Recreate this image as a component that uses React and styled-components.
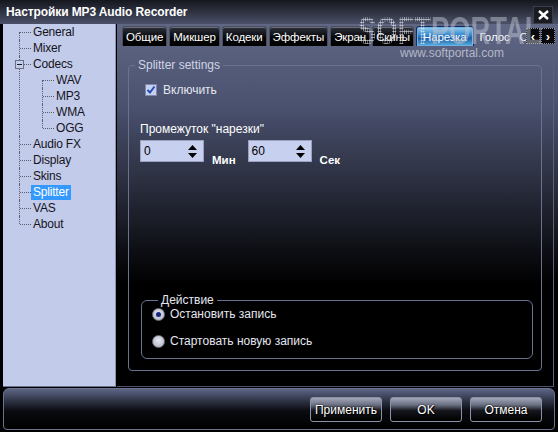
import React from "react";
import styled, { createGlobalStyle, css } from "styled-components";

const Global = createGlobalStyle`
  html, body { margin: 0; padding: 0; background: #000; }
  body { font-family: "Liberation Sans", Arial, sans-serif; font-size: 11px; }
  * { box-sizing: border-box; }
`;

const Window = styled.div`
  position: relative;
  width: 558px;
  height: 432px;
  background: #000;
  display: flex;
  flex-direction: column;
  overflow: hidden;
`;

const TitleBar = styled.div`
  height: 24px;
  flex: none;
  display: flex;
  align-items: center;
  justify-content: space-between;
  padding: 0 6px 0 6px;
  background: linear-gradient(#15171e 0%, #2c303e 45%, #4a5068 100%);
`;

const Title = styled.div`
  color: #fff;
  font-weight: bold;
  font-size: 12px;
  letter-spacing: -0.1px;
`;

const CloseBtn = styled.div`
  width: 20px;
  height: 18px;
  margin-top: 6px;
  margin-right: -1px;
  background: #1a1c22;
  border: 1px solid #3a3e4a;
  display: flex;
  align-items: center;
  justify-content: center;
`;

const Main = styled.div`
  flex: none;
  height: 363px;
  display: flex;
  padding-left: 3px;
`;

const Tree = styled.div`
  width: 113px;
  flex: none;
  background: #c3cbea;
  border-right: 1px solid #8a92b0;
  border-bottom: 1px solid #6a7290;
  padding-left: 16px;
`;

const TreeList = styled.ul`
  list-style: none;
  margin: 0;
  padding: 0;
  ${(p) =>
    p.$nested &&
    css`
      padding-left: 23px;
    `}
`;

const TreeItem = styled.li`
  position: relative;
  &::before {
    content: "";
    position: absolute;
    left: 0;
    top: 0;
    height: 100%;
    border-left: 1px dotted #5a5f70;
  }
  &:first-child::before {
    top: 8px;
    height: calc(100% - 8px);
  }
  &:last-child::before {
    height: 8px;
  }
`;

const Row = styled.div`
  position: relative;
  height: 16px;
  display: flex;
  align-items: center;
  padding-left: 12px;
  &::after {
    content: "";
    position: absolute;
    left: 1px;
    top: 8px;
    width: 11px;
    border-top: 1px dotted #5a5f70;
  }
`;

const Label = styled.span`
  color: #14141c;
  font-size: 12px;
  line-height: 15px;
  padding: 0 2px;
  letter-spacing: -0.2px;
  ${(p) =>
    p.$selected &&
    css`
      background: #3399ff;
      color: #fff;
    `}
`;

const Toggle = styled.span`
  position: absolute;
  left: -4px;
  top: 4px;
  width: 9px;
  height: 9px;
  background: #c3cbea;
  border: 1px solid #6c7080;
  z-index: 1;
  &::after {
    content: "";
    position: absolute;
    left: 1px;
    top: 3px;
    width: 5px;
    border-top: 1px solid #1a1a24;
  }
`;

const Right = styled.div`
  flex: 1;
  display: flex;
  flex-direction: column;
  margin-left: 1px;
  background: linear-gradient(#5f6785 0px, #4b5270 80px, #2a2e3e 160px, #0c0d12 230px, #000 260px);
`;

const TabsRow = styled.div`
  height: 22px;
  flex: none;
  display: flex;
  align-items: flex-end;
  padding-left: 5px;
  gap: 2px;
  position: relative;
`;

const Tab = styled.div`
  height: 20px;
  padding: 0 3px;
  display: flex;
  align-items: center;
  color: #fff;
  font-size: 11.5px;
  letter-spacing: -0.1px;
  border: 1px solid #4a4e5c;
  border-bottom: none;
  border-radius: 3px 3px 0 0;
  background: linear-gradient(#2e313c, #050507 60%, #000);
  box-shadow: inset 0 1px 0 #6a6e7c;
  ${(p) =>
    p.$active &&
    css`
      background: linear-gradient(#9bd0f0 0%, #3a8cd0 40%, #1c5fa8 60%, #5ab2e0 100%);
      border-color: #1a2a50;
      box-shadow: inset 0 0 0 1px #6ab0e8;
      padding: 0 6px;
    `}
  ${(p) =>
    p.$plain &&
    css`
      background: transparent;
      border-color: transparent;
      box-shadow: none;
    `}
`;

const Scroller = styled.div`
  position: absolute;
  right: 3px;
  top: 4px;
  display: flex;
  gap: 1px;
`;

const ScrollBtn = styled.div`
  width: 14px;
  height: 16px;
  background: #0a0a0e;
  border: 1px dotted #8a8e9a;
  color: #fff;
  font-size: 13px;
  font-weight: bold;
  display: flex;
  align-items: center;
  justify-content: center;
`;

const Page = styled.div`
  flex: 1;
  display: flex;
  padding: 13px 11px 15px 11px;
  border-right: 1px solid #5a6278;
  border-bottom: 1px solid #4a5068;
  margin-right: 4px;
`;

const Group = styled.fieldset`
  flex: 1;
  margin: 0;
  padding: 0;
  border: 1px solid #6a7290;
  border-radius: 4px;
  display: flex;
  flex-direction: column;
  min-width: 0;
  ${(p) =>
    p.$inner &&
    css`
      flex: none;
      height: 65px;
      margin: auto 8px 11px 12px;
      border-radius: 6px;
      padding: 1px 0 0 10px;
      gap: 13px;
    `}
`;

const Legend = styled.legend`
  padding: 0 3px;
  margin-left: 6px;
  font-size: 12px;
  color: ${(p) => p.$color || "#d0d4e4"};
  line-height: 12px;
`;

const CheckRow = styled.label`
  display: flex;
  align-items: center;
  gap: 6px;
  margin: 12px 0 0 16px;
  color: #e4e6f0;
  font-size: 12px;
`;

const CheckBox = styled.span`
  width: 12px;
  height: 12px;
  background: #c8d0f0;
  border: 1px solid #8088a8;
  display: flex;
  align-items: center;
  justify-content: center;
`;

const FieldTitle = styled.div`
  margin: 25px 0 0 11px;
  color: #fff;
  font-size: 12px;
`;

const SpinRow = styled.div`
  display: flex;
  align-items: flex-end;
  margin: 4px 0 0 11px;
`;

const Spin = styled.div`
  width: 64px;
  height: 22px;
  background: #c8d0f0;
  border: 1px solid #9aa2c0;
  display: flex;
  align-items: center;
  justify-content: space-between;
  padding: 0 6px 0 3px;
  color: #000;
  font-size: 12px;
`;

const Arrows = styled.div`
  display: flex;
  flex-direction: column;
  gap: 3px;
`;

const Unit = styled.span`
  color: #fff;
  font-size: 11.5px;
  margin: 0 ${(p) => p.$mr || 0}px -4px 8px;
  font-weight: bold;
`;

const RadioRow = styled.div`
  display: flex;
  align-items: center;
  gap: 5px;
  color: #e4e6f0;
  font-size: 12px;
`;

const Radio = styled.span`
  width: 13px;
  height: 13px;
  border-radius: 50%;
  background: radial-gradient(circle at 50% 40%, #e8eaf2, #a8acbc);
  border: 1px solid #70747f;
  display: flex;
  align-items: center;
  justify-content: center;
  ${(p) =>
    p.$on &&
    css`
      &::after {
        content: "";
        width: 5px;
        height: 5px;
        border-radius: 50%;
        background: #14247a;
      }
    `}
`;

const BottomBar = styled.div`
  flex: 1;
  margin: 1px 3px 2px 3px;
  border: 1px solid #6a7290;
  border-radius: 6px 6px 4px 4px;
  background: linear-gradient(#5d6584 0%, #3a4055 22%, #0a0b10 55%, #000 100%);
  display: flex;
  justify-content: flex-end;
  align-items: flex-start;
  gap: 8px;
  padding: 8px 12px 0 0;
`;

const Button = styled.button`
  width: 72px;
  height: 25px;
  border: 1px solid #8a92aa;
  border-radius: 3px;
  background: linear-gradient(#a2a8b8 0%, #6a7082 30%, #15161c 55%, #000 100%);
  color: #fff;
  font-family: "Liberation Sans", Arial, sans-serif;
  font-size: 12px;
  text-shadow: 0 0 2px #000, 1px 1px 1px #000;
  padding: 0;
`;

const Watermark = styled.div`
  position: absolute;
  left: 358px;
  top: 12px;
  pointer-events: none;
  display: flex;
  flex-direction: column;
`;

const WmBig = styled.div`
  display: flex;
  font-family: "Liberation Sans", Arial, sans-serif;
  font-weight: bold;
  font-size: 38px;
  line-height: 38px;
  transform: scaleX(0.72);
  transform-origin: left;
  width: 260px;
`;

const WmSoft = styled.span`
  color: transparent;
  background: radial-gradient(circle, rgba(230, 232, 240, 0.8) 0.9px, transparent 1.3px) 0 0 / 3px 3px;
  -webkit-background-clip: text;
  background-clip: text;
`;

const WmPortal = styled.span`
  color: rgba(190, 194, 206, 0.5);
`;

const WmUrl = styled.div`
  margin: -4px 0 0 42px;
  color: #b4b8c6;
  font-size: 12px;
  font-family: "Liberation Sans", Arial, sans-serif;
`;

const Check = () => (
  <svg width="10" height="10" viewBox="0 0 10 10">
    <path d="M1.5 5 L4 7.5 L8.5 1.5" fill="none" stroke="#1f4fb8" strokeWidth="2" />
  </svg>
);

const Up = () => (
  <svg width="9" height="5" viewBox="0 0 9 5">
    <path d="M0 5 L4.5 0 L9 5 Z" fill="#000" />
  </svg>
);
const Down = () => (
  <svg width="9" height="5" viewBox="0 0 9 5">
    <path d="M0 0 L4.5 5 L9 0 Z" fill="#000" />
  </svg>
);

const tree = [
  { label: "General" },
  { label: "Mixer" },
  { label: "Codecs", children: ["WAV", "MP3", "WMA", "OGG"] },
  { label: "Audio FX" },
  { label: "Display" },
  { label: "Skins" },
  { label: "Splitter", selected: true },
  { label: "VAS" },
  { label: "About" },
];

const tabs = ["Общие", "Микшер", "Кодеки", "Эффекты", "Экран", "Скины", "Нарезка", "Голос", "О"];

export default function App() {
  return (
    <>
      <Global />
      <Window>
        <TitleBar>
          <Title>Настройки MP3 Audio Recorder</Title>
          <CloseBtn>
            <svg width="11" height="10" viewBox="0 0 11 10">
              <path d="M1 1 L10 9 M10 1 L1 9" stroke="#fff" strokeWidth="2.4" />
            </svg>
          </CloseBtn>
        </TitleBar>
        <Main>
          <Tree>
            <TreeList>
              {tree.map((n) => (
                <TreeItem key={n.label}>
                  <Row>
                    {n.children && <Toggle />}
                    <Label $selected={n.selected}>{n.label}</Label>
                  </Row>
                  {n.children && (
                    <TreeList $nested>
                      {n.children.map((c) => (
                        <TreeItem key={c}>
                          <Row>
                            <Label>{c}</Label>
                          </Row>
                        </TreeItem>
                      ))}
                    </TreeList>
                  )}
                </TreeItem>
              ))}
            </TreeList>
          </Tree>
          <Right>
            <TabsRow>
              {tabs.map((t) => (
                <Tab key={t} $active={t === "Нарезка"} $plain={t === "Голос" || t === "О"}>
                  {t}
                </Tab>
              ))}
              <Scroller>
                <ScrollBtn>‹</ScrollBtn>
                <ScrollBtn>›</ScrollBtn>
              </Scroller>
            </TabsRow>
            <Page>
              <Group>
                <Legend>Splitter settings</Legend>
                <CheckRow>
                  <CheckBox>
                    <Check />
                  </CheckBox>
                  Включить
                </CheckRow>
                <FieldTitle>Промежуток "нарезки"</FieldTitle>
                <SpinRow>
                  <Spin>
                    0
                    <Arrows>
                      <Up />
                      <Down />
                    </Arrows>
                  </Spin>
                  <Unit $mr={12}>Мин</Unit>
                  <Spin>
                    60
                    <Arrows>
                      <Up />
                      <Down />
                    </Arrows>
                  </Spin>
                  <Unit>Сек</Unit>
                </SpinRow>
                <Group $inner>
                  <Legend $color="#e4e6f0">Действие</Legend>
                  <RadioRow>
                    <Radio $on />
                    Остановить запись
                  </RadioRow>
                  <RadioRow>
                    <Radio />
                    Стартовать новую запись
                  </RadioRow>
                </Group>
              </Group>
            </Page>
          </Right>
        </Main>
        <BottomBar>
          <Button>Применить</Button>
          <Button>OK</Button>
          <Button>Отмена</Button>
        </BottomBar>
        <Watermark>
          <WmBig>
            <WmSoft>SOFT</WmSoft>
            <WmPortal>PORTAL</WmPortal>
          </WmBig>
          <WmUrl>www.softportal.com</WmUrl>
        </Watermark>
      </Window>
    </>
  );
}
